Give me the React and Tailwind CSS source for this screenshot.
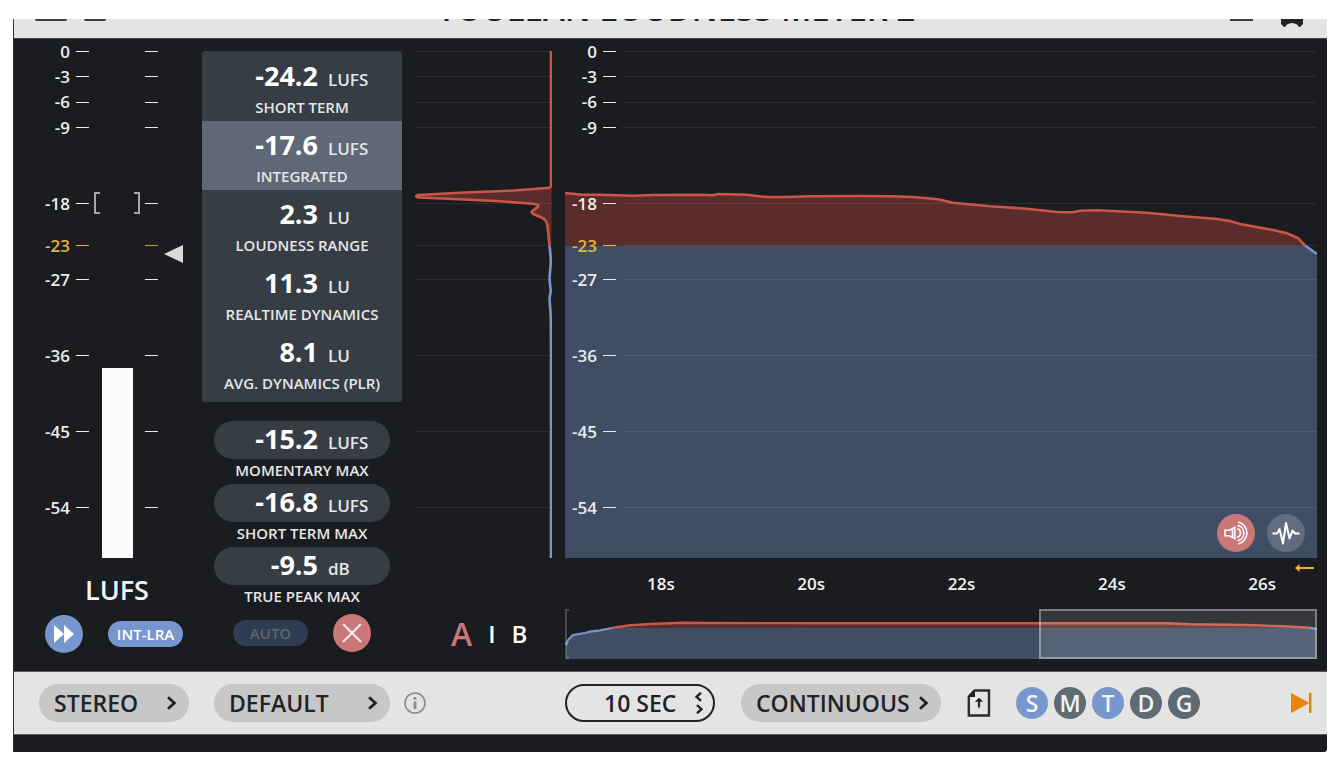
import { useState } from "react";
import clsx from "clsx";

// span = distance in dB down to the next tick
const ticks = [
  { db: 0, span: 3 },
  { db: -3, span: 3 },
  { db: -6, span: 3 },
  { db: -9, span: 9 },
  { db: -18, span: 5 },
  { db: -23, span: 4, target: true },
  { db: -27, span: 9 },
  { db: -36, span: 9 },
  { db: -45, span: 9 },
  { db: -54, span: 6 },
];

const readouts = [
  { value: "-24.2", unit: "LUFS", label: "SHORT TERM" },
  { value: "-17.6", unit: "LUFS", label: "INTEGRATED", active: true },
  { value: "2.3", unit: "LU", label: "LOUDNESS RANGE" },
  { value: "11.3", unit: "LU", label: "REALTIME DYNAMICS" },
  { value: "8.1", unit: "LU", label: "AVG. DYNAMICS (PLR)" },
];

const maxReadouts = [
  { value: "-15.2", unit: "LUFS", label: "MOMENTARY MAX" },
  { value: "-16.8", unit: "LUFS", label: "SHORT TERM MAX" },
  { value: "-9.5", unit: "dB", label: "TRUE PEAK MAX" },
];

const times = ["18s", "20s", "22s", "24s", "26s"];

const PLOT_H = 507;
const TARGET_Y = 194.5;
const gridYs = ticks.map((t) => Math.round((-t.db / 60) * PLOT_H) + 0.5);

const RED = "#c9564a";
const BLUE = "#7796cd";
const RED_FILL = "#5a2d2b";
const BLUE_FILL = "#3f4e64";

const curve =
  "M0 142 L8 142.7 L17 143.7 L35 143.7 L68 144.7 L88 144 L135 143.7 L148 144.3 L153 143 L182 143.7 L192 145 L202 146 L222 146 L245 145.3 L295 145 L325 145.3 L348 146 L373 148.3 L388 151.7 L425 155.3 L462 157.7 L492 161 L508 161.3 L515 159.7 L532 159.3 L582 161.7 L615 165 L652 168 L665 170 L675 173 L708 179 L722 182.3 L733 187 L740 194.5";

const histogram =
  "M136.5 0 V135 Q136.5 137 132 137 L100 139.5 L50 141.5 L4 144 Q-1 145.5 4 146.5 L50 148.5 L85 150.3 L118 152.7 Q126 153.5 123 156 L118 160 Q116 162 120 163.5 L128 167 Q132 169 133 175 L135 194.5";

const overview =
  "M47 19 L65 16.3 L85 15 L118 13.7 L142 14 L315 14.3 L602 14.3 L625 15.3 L682 16 L718 17.3 L745 18.8";

const Scale = ({ labelClass }) => (
  <div className="flex h-full flex-col">
    {ticks.map((tick) => (
      <div key={tick.db} className="min-h-0 basis-0" style={{ flexGrow: tick.span }}>
        <div
          className={clsx(
            "flex h-px items-center gap-1.5",
            tick.target ? "text-[#e9b23c]" : "text-[#ececec]"
          )}
        >
          <span className={clsx("text-right text-[17px] leading-5 font-semibold", labelClass)}>
            {tick.db}
          </span>
          <span className="h-px w-[13px] bg-current" />
        </div>
      </div>
    ))}
  </div>
);

const TickMarks = () => (
  <div className="flex h-full w-[13px] flex-col">
    {ticks.map((tick) => (
      <div key={tick.db} className="min-h-0 basis-0" style={{ flexGrow: tick.span }}>
        <div className={clsx("h-px", tick.target ? "bg-[#c99a32]" : "bg-[#e6e6e6]")} />
      </div>
    ))}
  </div>
);

const Value = ({ value, unit }) => (
  <div className="flex w-full items-baseline gap-2.5 leading-7 text-white">
    <span className="w-[116px] text-right text-[27px] font-bold">{value}</span>
    <span className="text-[17px] font-semibold text-[#e6e6e6]">{unit}</span>
  </div>
);

const Meter = () => (
  <section className="flex w-[188px] shrink-0 flex-col">
    <div className="flex h-[507px]">
      <Scale labelClass="w-14" />
      <div className="relative flex w-14 items-end justify-center">
        <div className="w-[31px] bg-[#fafafa]" style={{ height: "37.5%" }} />
        {/* loudness range brackets */}
        <div
          className="absolute inset-x-0 flex -translate-y-1/2 justify-between px-[5px]"
          style={{ top: "30%" }}
        >
          <span className="h-[22px] w-[6px] border-2 border-r-0 border-[#a6a6a4]" />
          <span className="h-[22px] w-[6px] border-2 border-l-0 border-[#a6a6a4]" />
        </div>
      </div>
      <TickMarks />
      <div className="flex flex-col pl-1.5">
        <div style={{ height: "38.3%" }} />
        <svg className="h-[18px] w-[19px]" viewBox="0 0 19 18" aria-hidden="true">
          <path d="M0 9 L19 0 V18 Z" fill="#d9d9d9" />
        </svg>
      </div>
    </div>
    <div className="flex h-[57px] items-center pt-2 pl-[71px] text-[27px] font-semibold text-[#f4f4f4]">
      LUFS
    </div>
    <div className="flex items-center gap-[25px] pl-[31px]">
      <button
        type="button"
        aria-label="Fast forward"
        className="flex size-[38px] items-center justify-center rounded-full bg-[#7796cd]"
      >
        <svg className="h-[18px] w-5" viewBox="0 0 20 18" aria-hidden="true">
          <path d="M0 0 L10 9 L0 18 Z M10 0 L20 9 L10 18 Z" fill="#fff" />
        </svg>
      </button>
      <button
        type="button"
        className="h-[26px] w-[75px] rounded-full bg-[#7796cd] text-[15px] font-semibold text-white"
      >
        INT-LRA
      </button>
    </div>
  </section>
);

const Readouts = () => (
  <section className="flex w-[200px] shrink-0 flex-col">
    <div className="overflow-hidden rounded-[3px] bg-[#373d45] pt-px pb-[5px]">
      {readouts.map((item) => (
        <div
          key={item.label}
          className={clsx(
            "flex h-[69px] flex-col items-center gap-[3px] pt-[10px]",
            item.active && "bg-[#5f6877]"
          )}
        >
          <Value value={item.value} unit={item.unit} />
          <div className="text-[15px] leading-5 font-semibold text-[#e6e6e6]">{item.label}</div>
        </div>
      ))}
    </div>
    <div className="mt-[19px] flex flex-col gap-1">
      {maxReadouts.map((item) => (
        <div key={item.label} className="flex flex-col gap-px">
          <div className="mx-3 flex h-[38px] items-center rounded-full bg-[#373d45] pt-0.5">
            <div className="-ml-3 w-full">
              <Value value={item.value} unit={item.unit} />
            </div>
          </div>
          <div className="text-center text-[15px] leading-5 font-semibold text-[#e6e6e6]">
            {item.label}
          </div>
        </div>
      ))}
    </div>
    <div className="mt-2 flex items-center gap-[25px] pl-[31px]">
      <button
        type="button"
        className="h-[26px] w-[75px] rounded-full bg-[#2f3d54] text-[15px] font-semibold text-[#626468]"
      >
        AUTO
      </button>
      <button
        type="button"
        aria-label="Reset"
        className="flex size-[38px] items-center justify-center rounded-full bg-[#c97777]"
      >
        <svg className="size-5" viewBox="0 0 20 20" aria-hidden="true">
          <path d="M1 1 L19 19 M19 1 L1 19" stroke="#f3e6e6" strokeWidth="2.4" />
        </svg>
      </button>
    </div>
  </section>
);

const Histogram = () => (
  <section className="flex w-[137px] shrink-0 flex-col">
    <svg className="h-[507px] w-full" viewBox="0 0 137 507" preserveAspectRatio="none">
      <path d={`${histogram} L136.5 194.5 V137 Z`} fill={RED_FILL} />
      {gridYs.map((y) => (
        <line key={y} x1="0" x2="137" y1={y} y2={y} stroke="#fff" strokeOpacity="0.08" />
      ))}
      <g fill="none" strokeWidth="2.6" transform="translate(-0.5 0)">
        <path d={histogram} stroke={RED} />
        <path
          d="M135 194.5 Q136.5 206 136.2 213 L135 228 L136.3 240 L135 247 L136.3 266 L136.5 300 V507"
          stroke={BLUE}
        />
      </g>
    </svg>
    <div className="mt-[57px] flex h-[38px] items-center gap-4 pl-9 text-2xl font-semibold text-white">
      <button type="button" className="text-[32px] text-[#c97777]">
        A
      </button>
      <span>I</span>
      <button type="button">B</button>
    </div>
  </section>
);

const LoudnessGraph = () => (
  <section className="flex min-w-0 flex-1 flex-col">
    <div className="relative h-[507px]">
      <svg className="size-full" viewBox="0 0 752 507" preserveAspectRatio="none">
        <path d={`${curve} H0 Z`} fill={RED_FILL} />
        <path d={`M0 ${TARGET_Y} H740 L752 203 V507 H0 Z`} fill={BLUE_FILL} />
        {gridYs.map((y) => (
          <line key={y} x1="57" x2="752" y1={y} y2={y} stroke="#fff" strokeOpacity="0.08" />
        ))}
        <path d={curve} fill="none" stroke={RED} strokeWidth="2.6" />
        <path d="M740 194.5 L752 203" fill="none" stroke={BLUE} strokeWidth="2.6" />
      </svg>
      <div className="absolute inset-y-0 left-0">
        <Scale labelClass="w-8" />
      </div>
      <div className="absolute right-3 bottom-1.5 flex gap-3">
        <button
          type="button"
          aria-label="Play sound"
          className="flex size-[38px] items-center justify-center rounded-full bg-[#c97777]"
        >
          <svg className="h-6 w-[26px]" viewBox="0 0 26 24" fill="none" stroke="#fff" aria-hidden="true">
            <path d="M2 9.3 H6.5 L11.8 6.3 V17.7 L6.5 14.7 H2 Z M9.5 7.6 V16.4" strokeWidth="1.6" />
            <path d="M14.2 7.6 A4.6 4.6 0 0 1 14.2 16.4" strokeWidth="1.6" />
            <path d="M14.6 4.2 A8 8 0 0 1 14.6 19.8" strokeWidth="1.6" />
            <path d="M15.2 1 A11.3 11.3 0 0 1 15.2 23" strokeWidth="1.6" />
          </svg>
        </button>
        <button
          type="button"
          aria-label="Show waveform"
          className="flex size-[38px] items-center justify-center rounded-full bg-[#626c7e]"
        >
          <svg className="h-6 w-7" viewBox="0 0 28 24" fill="none" stroke="#fff" aria-hidden="true">
            <path
              d="M0.5 12.5 H5 L7.5 8 L11 22.5 L14 2 L17.5 17.5 L20.5 9.5 L23 12.5 H27.5"
              strokeWidth="2"
              strokeLinejoin="round"
            />
          </svg>
        </button>
      </div>
      <svg
        className="absolute top-full right-[3px] mt-1.5 h-2 w-[19px]"
        viewBox="0 0 19 8"
        aria-hidden="true"
      >
        <path d="M3 4 H18" stroke="#f9b233" strokeWidth="2.2" strokeLinecap="round" />
        <path d="M0 4 L4.5 0 V8 Z" fill="#f9b233" />
      </svg>
    </div>
    <div className="flex h-[51px] items-center justify-between pr-[41px] pl-[82px] text-[17px] font-semibold text-[#f0f0f0]">
      {times.map((time) => (
        <span key={time}>{time}</span>
      ))}
    </div>
    <div className="relative h-[50px]">
      <svg className="size-full" viewBox="0 0 752 50" preserveAspectRatio="none">
        <path d={`${overview} V20 H47 Z`} fill={RED_FILL} />
        <path
          d="M1 36 L3 31 L8 26 L20 24 L25 22.7 L35 21.3 L47 19 H745 L752 20 V50 H1 Z"
          fill={BLUE_FILL}
        />
        <path
          d="M1 36 L3 31 L8 26 L20 24 L25 22.7 L35 21.3 L47 19"
          fill="none"
          stroke={BLUE}
          strokeWidth="2.2"
        />
        <path d={overview} fill="none" stroke={RED} strokeWidth="2.4" />
        <path d="M745 18.8 L752 20" stroke={BLUE} strokeWidth="2.2" />
        <path d="M4 1 H1 V49 H4" fill="none" stroke="#fff" strokeOpacity="0.2" strokeWidth="2" />
      </svg>
      <div className="absolute inset-y-0 right-0 w-[37%] border-2 border-white/35 bg-white/12" />
    </div>
  </section>
);

const Chevron = ({ className }) => (
  <svg
    className={clsx("pointer-events-none absolute h-[14px] w-2.5", className)}
    viewBox="0 0 10 14"
    fill="none"
    stroke="#1f2226"
    strokeWidth="2.8"
    aria-hidden="true"
  >
    <path d="M1 1.2 L7.4 7 L1 12.8" />
  </svg>
);

const Dropdown = ({ label, value, className }) => (
  <div className={clsx("relative flex items-center", className)}>
    <select
      aria-label={label}
      className="h-[38px] w-full appearance-none rounded-full bg-[#c7c7c7] pl-[15px] text-[23px] font-semibold text-[#1f2226] outline-none"
    >
      <option>{value}</option>
    </select>
    <Chevron className="right-3" />
  </div>
);

const meterModes = ["S", "M", "T", "D", "G"];

const BottomBar = () => {
  const [active, setActive] = useState(["S", "T"]);

  const toggle = (mode) =>
    setActive((prev) =>
      prev.includes(mode) ? prev.filter((m) => m !== mode) : [...prev, mode]
    );

  return (
    <footer className="flex h-16 items-center border-y border-[#55585c] bg-[#e4e4e4]">
      <div className="flex w-[551px] shrink-0 items-center pl-[25px]">
        <Dropdown label="Channels" value="STEREO" className="w-[150px]" />
        <Dropdown label="Preset" value="DEFAULT" className="ml-[25px] w-[176px]" />
        <button type="button" aria-label="Info" className="ml-3.5">
          <svg className="size-[22px]" viewBox="0 0 22 22" fill="none" stroke="#8c8c8c" aria-hidden="true">
            <circle cx="11" cy="11" r="10" strokeWidth="1.6" />
            <path d="M11 9.3 V17" strokeWidth="2.8" />
            <path d="M11 5 V7.6" strokeWidth="2.8" />
          </svg>
        </button>
      </div>
      <div className="relative flex w-[150px] shrink-0 items-center">
        <select
          aria-label="Time window"
          className="h-[38px] w-full appearance-none rounded-full border-2 border-[#1f2226] bg-transparent pl-[37px] text-[23px] font-semibold text-[#1f2226] outline-none"
        >
          <option>10 SEC</option>
        </select>
        <svg
          className="pointer-events-none absolute right-3 h-[22px] w-2"
          viewBox="0 0 8 22"
          fill="none"
          stroke="#1f2226"
          strokeWidth="2.4"
          aria-hidden="true"
        >
          <path d="M6 0.8 L1.5 4.8 L6 8.8" />
          <path d="M2 13.2 L6.5 17.2 L2 21.2" />
        </svg>
      </div>
      <Dropdown label="Mode" value="CONTINUOUS" className="ml-[26px] w-[200px] shrink-0" />
      <button type="button" aria-label="Export" className="ml-[26px] shrink-0">
        <svg className="h-7 w-6" viewBox="0 0 24 28" fill="none" stroke="#2a2c31" aria-hidden="true">
          <path d="M7.5 1.5 H22 V26.5 H1.8 V7.5 Z" strokeWidth="2.4" />
          <path d="M8 1 V8 H1 Z" fill="#1f2226" stroke="none" />
          <path d="M12 18.5 V11" strokeWidth="2.2" />
          <path d="M8.5 12.5 L12 9 L15.5 12.5 Z" fill="#1f2226" strokeWidth="0.6" />
        </svg>
      </button>
      <div className="ml-[25px] flex gap-1.5">
        {meterModes.map((mode) => (
          <button
            key={mode}
            type="button"
            onClick={() => toggle(mode)}
            className={clsx(
              "size-8 rounded-full text-[23px] leading-8 font-semibold text-[#f4f4f4]",
              active.includes(mode) ? "bg-[#7796cd]" : "bg-[#5f6b73]"
            )}
          >
            {mode}
          </button>
        ))}
      </div>
      <button type="button" aria-label="Skip to end" className="mr-[15px] ml-auto">
        <svg className="h-5 w-[21px]" viewBox="0 0 21 20" aria-hidden="true">
          <path d="M0 0 L18.5 10 L0 20 Z M18 0 H20.5 V20 H18 Z" fill="#e98300" />
        </svg>
      </button>
    </footer>
  );
};

const TopBar = () => (
  <header className="flex h-[19px] items-end overflow-hidden bg-[#e4e4e4]">
    <div className="flex h-16 w-full shrink-0 items-center justify-between pr-6 pl-[21px] text-[#1f2226]">
      <div className="flex gap-[17px] pt-[5px]">
        <button type="button" aria-label="Menu">
          <svg className="h-6 w-8" viewBox="0 0 32 24" fill="none" stroke="#3c3e42" aria-hidden="true">
            <rect x="1" y="1" width="30" height="22" rx="1" strokeWidth="2" />
          </svg>
        </button>
        <button type="button" aria-label="View">
          <svg className="h-6 w-[22px]" viewBox="0 0 22 24" fill="none" stroke="#3c3e42" aria-hidden="true">
            <rect x="1" y="1" width="20" height="22" rx="1" strokeWidth="2" />
          </svg>
        </button>
      </div>
      <h1 className="pt-1.5 pl-4 text-[33px] font-semibold">YOULEAN LOUDNESS METER 2</h1>
      <div className="flex items-center gap-7 pt-[5px]">
        <button type="button" aria-label="Minimize">
          <svg className="h-6 w-[23px]" viewBox="0 0 23 24" aria-hidden="true">
            <path d="M0 22 H23 V24 H0 Z" fill="#3c3e42" />
          </svg>
        </button>
        <button type="button" aria-label="Settings" className="pt-3">
          <svg className="h-6 w-[22px]" viewBox="0 0 22 24" aria-hidden="true">
            <path
              d="M0 0 H22 V21 L19 24 H18 L16 21.5 Q11 18.5 6 21.5 L4 24 H3 L0 21 Z"
              fill="#1f2226"
            />
          </svg>
        </button>
      </div>
    </div>
  </header>
);

const App = () => {
  return (
    <div className="min-h-screen bg-white pt-[19px] pr-[17px] pb-4 pl-[13px] font-['Open_Sans',sans-serif]">
      <div className="overflow-hidden rounded-br-[3px] border-l border-[#2e2f33] bg-[#1b1c20]">
        <TopBar />
        <main className="flex border-t border-[#3f4247] pt-3 pr-2.5 pb-3">
          <Meter />
          <Readouts />
          <div className="flex min-w-0 flex-1 gap-[13px] pl-[13px]">
            <Histogram />
            <LoudnessGraph />
          </div>
        </main>
        <BottomBar />
        <div className="h-[17px]" />
      </div>
    </div>
  );
};

export default App;
